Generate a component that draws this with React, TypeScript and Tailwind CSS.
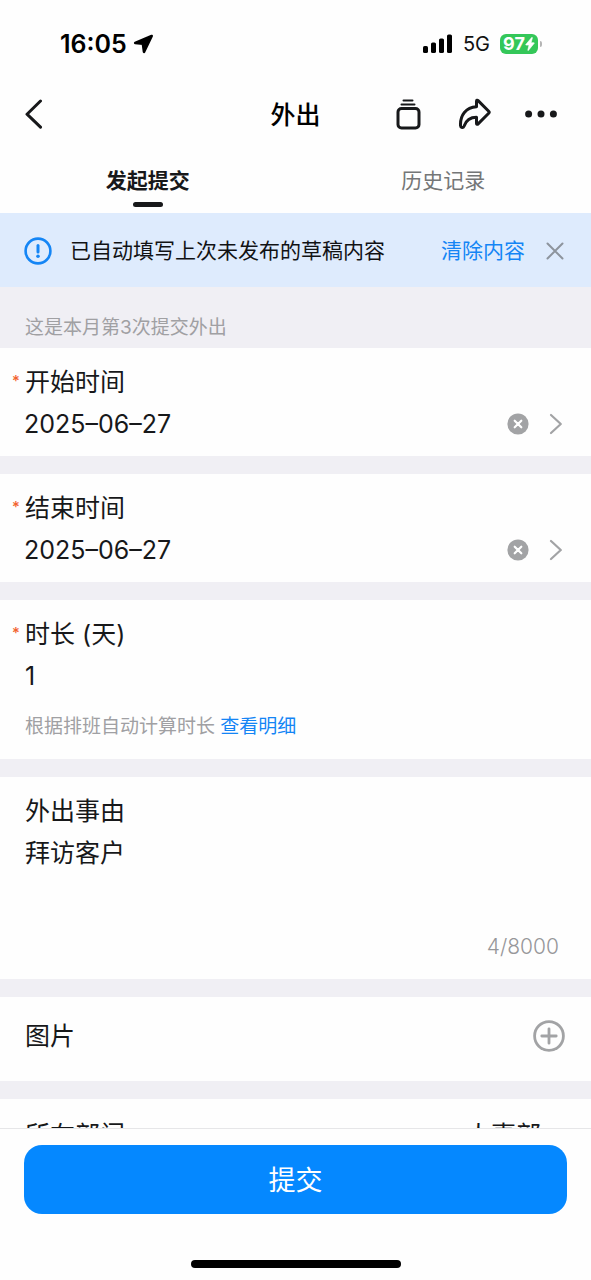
import { useState, type ReactNode } from 'react';

function StatusBar() {
  return (
    <div className="flex h-20 shrink-0 items-center justify-between pt-2 pr-[49px] pl-[60px]">
      <div className="flex items-center gap-1.5">
        <span className="text-[25px] leading-8 font-semibold text-black">16:05</span>
        <svg width="21" height="20" viewBox="0 0 21 20" fill="#000" stroke="#000" strokeWidth="2.600" strokeLinejoin="round" aria-hidden="true">
          <path d="M18.700 2 2.200 8.900 9.900 9.800 11 17.900Z" />
        </svg>
      </div>
      <div className="flex items-center gap-2.5">
        <svg width="30" height="20" viewBox="0 0 30 20" fill="#000" aria-hidden="true">
          <rect x="0" y="12" width="5" height="7" rx="1.600" />
          <rect x="8" y="8.500" width="5" height="10.500" rx="1.600" />
          <rect x="16" y="4.500" width="5" height="14.500" rx="1.600" />
          <rect x="24" y="0.500" width="5" height="18.500" rx="1.600" />
        </svg>
        <span className="text-[20px] leading-8 text-[#111]">5G</span>
        <div className="flex items-center gap-0.5">
          <div className="flex h-5 w-[38px] items-center justify-center rounded-md bg-[#34c759] text-white">
            <span className="text-[18px] leading-5 font-bold">97</span>
            <svg width="10" height="14" viewBox="0 0 9 14" fill="currentColor" stroke="currentColor" strokeWidth="0.600" aria-hidden="true">
              <path d="M6.200.5.3 7.500c-.2.3 0 .6.3.6h2.900L2.300 13.100c-.1.5.3.6.6.3L8.700 6.300c.2-.3.1-.6-.3-.6H5.600L6.900.9C7 .4 6.500.2 6.200.5Z" />
            </svg>
          </div>
          <span className="h-1.5 w-0.5 rounded-r-sm bg-[#b5b5b5]" />
        </div>
      </div>
    </div>
  );
}

function NavBar() {
  return (
    <header className="grid h-[68px] shrink-0 grid-cols-[1fr_auto_1fr] items-center px-6">
      <button type="button" aria-label="返回" className="justify-self-start">
        <svg width="20" height="30" viewBox="0 0 20 30" fill="none" stroke="#17181a" strokeWidth="3" strokeLinecap="round" strokeLinejoin="round">
          <path d="M16.500 2 3 15.200 16.500 28.200" />
        </svg>
      </button>
      <h1 className="pt-0.5 text-[25px] leading-9 font-medium text-black">外出</h1>
      <div className="flex items-center justify-self-end pr-2.5">
        <button type="button" aria-label="草稿箱">
          <svg width="26" height="32" viewBox="0 0 26 32" fill="none" stroke="#17181a" strokeLinecap="round">
            <path d="M8.500 2.500h9M6.500 6.500h13" strokeWidth="2" />
            <rect x="3" y="10.500" width="21" height="19.500" rx="3.500" strokeWidth="3" />
          </svg>
        </button>
        <button type="button" aria-label="分享" className="pr-[34px] pl-9">
          <svg width="34" height="32" viewBox="0 0 34 32" fill="none" stroke="#17181a" strokeWidth="3" strokeLinejoin="round">
            <path d="M19.500 3.200c0-1 .9-1.300 1.600-.6l10.600 10.700c.6.6.6 1.300 0 1.900L21.100 25.900c-.7.7-1.600.4-1.600-.5v-6.100C13 19.300 9 22.500 7 28.200c-.8 2-3.400 1.600-3.500-.4C3 17 9 9.500 19.500 8.800Z" />
          </svg>
        </button>
        <button type="button" aria-label="更多">
          <svg width="32" height="8" viewBox="0 0 32 8" fill="#17181a">
            <circle cx="3.600" cy="4" r="3.500" />
            <circle cx="16" cy="4" r="3.500" />
            <circle cx="28.400" cy="4" r="3.500" />
          </svg>
        </button>
      </div>
    </header>
  );
}

function Tabs() {
  const [active, setActive] = useState(0);
  return (
    <div role="tablist" className="grid h-[65px] shrink-0 grid-cols-2">
      {['发起提交', '历史记录'].map((name, i) => (
        <button
          key={name}
          type="button"
          role="tab"
          aria-selected={active === i}
          onClick={() => setActive(i)}
          className="flex flex-col items-center gap-[5px] pt-[17px]"
        >
          <span className={active === i ? 'text-[21px] leading-8 font-bold text-[#17181a]' : 'text-[21px] leading-8 text-[#747677]'}>
            {name}
          </span>
          {active === i && <span className="h-[5px] w-[30px] rounded-full bg-[#17181a]" />}
        </button>
      ))}
    </div>
  );
}

function DraftBanner({ onClear }: { onClear: () => void }) {
  const [open, setOpen] = useState(true);
  if (!open) return null;
  return (
    <div className="flex h-[74px] shrink-0 items-center bg-[#deebfd] pt-0.5 pr-[26px] pl-6">
      <svg width="28" height="28" viewBox="0 0 28 28" fill="none" stroke="#1485f5" aria-hidden="true">
        <circle cx="14" cy="14" r="12.400" strokeWidth="2.600" />
        <path d="M14 8.500v6.500" strokeWidth="3" strokeLinecap="round" />
        <circle cx="14" cy="19.300" r="1.800" fill="#1485f5" stroke="none" />
      </svg>
      <p className="flex-1 pl-[18px] text-[21px] leading-8 text-[#111214]">已自动填写上次未发布的草稿内容</p>
      <button type="button" onClick={onClear} className="text-[21px] leading-8 text-[#1485f5]">
        清除内容
      </button>
      <button type="button" aria-label="关闭" onClick={() => setOpen(false)} className="pl-5">
        <svg width="20" height="20" viewBox="0 0 20 20" fill="none" stroke="#8d949d" strokeWidth="2" strokeLinecap="round">
          <path d="m2.500 2.500 15 15m0-15-15 15" />
        </svg>
      </button>
    </div>
  );
}

function Label({ htmlFor, required, children }: { htmlFor: string; required?: boolean; children: ReactNode }) {
  return (
    <label htmlFor={htmlFor} className="flex text-[25px] leading-[42px] text-[#17181a]">
      <span className="w-[13px] text-[15px] leading-10 font-medium text-[#f2622e]">{required ? '*' : ''}</span>
      <span>{children}</span>
    </label>
  );
}

function DateField({ id, label, value, onClear }: { id: string; label: string; value: string; onClear: () => void }) {
  return (
    <section className="bg-[#fefefe] pt-[13px] pr-7 pb-[11px] pl-3">
      <Label htmlFor={id} required>
        {label}
      </Label>
      <div className="flex items-center pl-3">
        <input
          id={id}
          readOnly
          value={value}
          className="h-[42px] min-w-0 flex-1 bg-transparent text-[25px] leading-[42px] text-[#17181a] outline-none"
        />
        <button type="button" aria-label={`清除${label}`} onClick={onClear}>
          <svg width="22" height="22" viewBox="0 0 22 22" fill="none">
            <circle cx="11" cy="11" r="10.600" fill="#a2a3a5" />
            <path d="m7.700 7.700 6.600 6.600m0-6.600-6.600 6.600" stroke="#fff" strokeWidth="2.200" strokeLinecap="round" />
          </svg>
        </button>
        <button type="button" aria-label={`选择${label}`} className="pl-5">
          <svg width="14" height="22" viewBox="0 0 14 22" fill="none" stroke="#a2a3a5" strokeWidth="2.200" strokeLinecap="round" strokeLinejoin="round">
            <path d="m2 2 9.800 9L2 20" />
          </svg>
        </button>
      </div>
    </section>
  );
}

export default function App() {
  const [start, setStart] = useState('2025–06–27');
  const [end, setEnd] = useState('2025–06–27');
  const [reason, setReason] = useState('拜访客户');

  const clearAll = () => {
    setStart('');
    setEnd('');
    setReason('');
  };

  return (
    <div className="flex h-screen flex-col bg-[#fefefe] font-['Inter','Noto_Sans_CJK_SC',sans-serif]">
      <StatusBar />
      <NavBar />
      <Tabs />
      <DraftBanner onClear={clearAll} />

      <main className="flex min-h-0 flex-1 flex-col overflow-y-auto bg-[#f0eff4] [scrollbar-width:none]">
        <p className="px-[25px] pt-[25px] pb-1 text-[19px] leading-8 text-[#a0a0a3]">这是本月第3次提交外出</p>
        <div className="flex flex-col gap-[18px]">
          <DateField id="start" label="开始时间" value={start} onClear={() => setStart('')} />
          <DateField id="end" label="结束时间" value={end} onClear={() => setEnd('')} />

          <section className="bg-[#fefefe] pt-[13px] pr-7 pb-3.5 pl-3">
            <Label htmlFor="duration" required>
              时长 (天)
            </Label>
            <div className="pl-[13px]">
              <input
                id="duration"
                readOnly
                value="1"
                className="block h-[42px] w-full bg-transparent text-[25px] leading-[42px] text-[#17181a] outline-none"
              />
              <p className="mt-3 text-[19px] leading-9 text-[#a0a0a3]">
                根据排班自动计算时长{' '}
                <a href="#detail" className="text-[#1485f5]">
                  查看明细
                </a>
              </p>
            </div>
          </section>

          <section className="bg-[#fefefe] pt-[13px] pr-8 pb-[17px] pl-3">
            <Label htmlFor="reason">外出事由</Label>
            <div className="pl-[13px]">
              <textarea
                id="reason"
                value={reason}
                maxLength={8000}
                onChange={(e) => setReason(e.target.value)}
                className="block h-[100px] w-full resize-none bg-transparent text-[25px] leading-[42px] text-[#17181a] outline-none"
              />
              <p className="text-right text-[21px] leading-[30px] font-light text-[#97979a]">{reason.length}/8000</p>
            </div>
          </section>

          <section className="flex items-center justify-between bg-[#fefefe] pt-[18px] pr-[26px] pb-6 pl-3">
            <Label htmlFor="photo">图片</Label>
            <button id="photo" type="button" aria-label="添加图片">
              <svg width="32" height="32" viewBox="0 0 32 32" fill="none" stroke="#a2a3a5" strokeWidth="2.800" strokeLinecap="round">
                <circle cx="16" cy="16" r="14.400" />
                <path d="M8.800 16h14.400M16 8.800v14.400" />
              </svg>
            </button>
          </section>

          <section className="flex items-center bg-[#fefefe] pt-[15px] pr-[50px] pb-5 pl-3">
            <Label htmlFor="department">所在部门</Label>
            <input
              id="department"
              readOnly
              value="人事部"
              className="h-[42px] min-w-0 flex-1 bg-transparent text-right text-[25px] leading-[42px] text-[#17181a] outline-none"
            />
          </section>
        </div>
      </main>

      <footer className="flex shrink-0 flex-col items-center border-t border-[#e6e6e8] bg-[#fefefe] px-6 pt-4 pb-3">
        <button type="submit" className="h-[69px] w-full rounded-[18px] bg-[#0588ff] pt-0.5 text-[27px] leading-10 text-white">
          提交
        </button>
        <span className="mt-[46px] h-2 w-[210px] rounded-full bg-black" />
      </footer>
    </div>
  );
}
